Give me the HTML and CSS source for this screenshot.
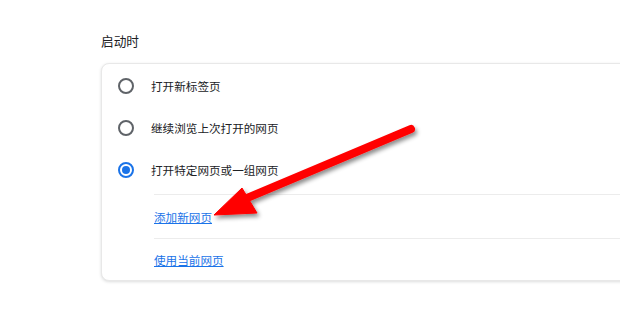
FILE: index.html
```html
<!DOCTYPE html>
<html lang="zh-CN">
<head>
    <meta charset="UTF-8">
    <title>启动时</title>
    <link rel="stylesheet" href="styles.css">
</head>
<body>
    <div class="page">
        <h2 class="section-title">启动时</h2>

        <div class="card">
            <label class="radio-row">
                <span class="radio"></span>
                <span class="label">打开新标签页</span>
            </label>
            <label class="radio-row">
                <span class="radio"></span>
                <span class="label">继续浏览上次打开的网页</span>
            </label>
            <label class="radio-row">
                <span class="radio checked"></span>
                <span class="label">打开特定网页或一组网页</span>
            </label>

            <div class="sub-list">
                <div class="link-row first"><a href="#">添加新网页</a></div>
                <div class="link-row"><a href="#">使用当前网页</a></div>
            </div>
        </div>
    </div>

    <!-- Annotation arrow drawn over the page -->
    <svg class="arrow" width="620" height="309" viewBox="0 0 620 309">
        <defs>
            <filter id="shadow" x="-20%" y="-20%" width="140%" height="140%">
                <feDropShadow dx="2" dy="3" stdDeviation="2" flood-color="#000" flood-opacity="0.45"/>
            </filter>
        </defs>
        <g filter="url(#shadow)" fill="#ff0000" stroke="#ff0000">
            <line x1="411" y1="129" x2="240" y2="201" stroke-width="8" stroke-linecap="round"/>
            <polygon points="214,215 242,188 257,213" stroke-width="1" stroke-linejoin="round"/>
        </g>
    </svg>
</body>
</html>
```

FILE: styles.css
```css
* {
    margin: 0;
    padding: 0;
    box-sizing: border-box;
}

body {
    font-family: "Noto Sans CJK SC", "Noto Sans", sans-serif;
    background: #ffffff;
    color: #202124;
    font-size: 11.6px;
    overflow: hidden;
    width: 620px;
    height: 309px;
}

.page {
    padding: 31px 0 0 101px;
}

.section-title {
    font-size: 12.7px;
    font-weight: 400;
    line-height: 20px;
    margin-bottom: 12px;
}

.card {
    width: 580px;
    background: #fff;
    border-radius: 8px;
    border: 1px solid #e8e8e8;
    box-shadow: 0 1px 3px rgba(60, 64, 67, 0.18);
    padding-top: 1px;
}

.radio-row {
    display: flex;
    align-items: center;
    height: 42px;
    padding-left: 16px;
}

.radio {
    width: 16px;
    height: 16px;
    border-radius: 50%;
    border: 2px solid #5f6368;
    margin-right: 17px;
    display: flex;
    align-items: center;
    justify-content: center;
}

.radio.checked {
    border-color: #1a73e8;
}

.radio.checked::after {
    content: '';
    width: 8px;
    height: 8px;
    border-radius: 50%;
    background: #1a73e8;
}

.label {
    line-height: 20px;
}

.sub-list {
    margin-top: 3px;
    margin-left: 52px;
}

.link-row {
    display: flex;
    align-items: center;
    height: 44px;
    border-top: 1px solid #ececec;
}

.link-row + .link-row {
    height: 42px;
}

.link-row a {
    color: #1a73e8;
    text-decoration: underline;
}

.arrow {
    position: absolute;
    left: 0;
    top: 0;
    pointer-events: none;
}
```
